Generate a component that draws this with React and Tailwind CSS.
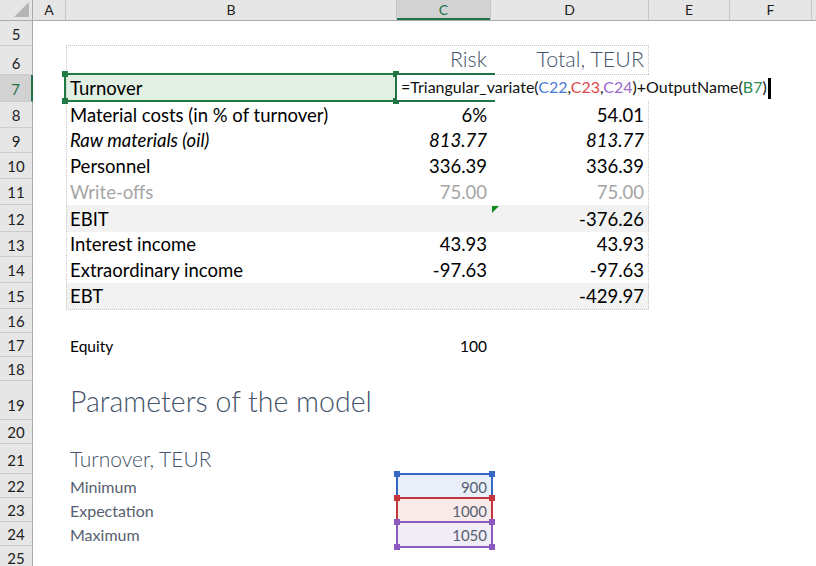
import React from 'react';

const FONT = "font-['Lato','Carlito',sans-serif]";

const COLS = [
  { key: 'A', w: 'w-[33px]' },
  { key: 'B', w: 'w-[331px]' },
  { key: 'C', w: 'w-[94px]', active: true },
  { key: 'D', w: 'w-[158px]' },
  { key: 'E', w: 'w-[81px]' },
  { key: 'F', w: 'w-[82px]' },
];

const BODY = 'text-[18.5px] text-black pb-[4px]';
const PARAM = 'text-[16px] text-[#56606f] pb-[3px]';
const PARAM_NUM = 'text-[15px] text-[#56606f] pb-[3px]';

// every row of the sheet, top to bottom
const ROWS = [
  { n: 5, h: 'h-[25px]' },
  { n: 6, h: 'h-[29px]', hdr: 'pt-[6px]', c: 'Risk', d: 'Total, TEUR', text: 'text-[21.5px] font-light text-[#44546a] pb-[5px]' },
  { n: 7, h: 'h-[27px]', b: 'Turnover', active: true, bBg: 'bg-[#e2f0e4]', text: 'text-[18.5px] text-black pb-[5px]' },
  { n: 8, h: 'h-[26px]', b: 'Material costs (in % of turnover)', c: '6%', d: '54.01', text: BODY },
  { n: 9, h: 'h-[25px]', b: 'Raw materials (oil)', c: '813.77', d: '813.77', text: `${BODY} italic` },
  { n: 10, h: 'h-[26px]', b: 'Personnel', c: '336.39', d: '336.39', text: BODY },
  { n: 11, h: 'h-[26px]', b: 'Write-offs', c: '75.00', d: '75.00', text: 'text-[18.5px] text-[#a5a5a5] pb-[4px]' },
  { n: 12, h: 'h-[27px]', b: 'EBIT', d: '-376.26', shade: 'bg-[#f2f2f2]', text: BODY },
  { n: 13, h: 'h-[25px]', b: 'Interest income', c: '43.93', d: '43.93', text: BODY },
  { n: 14, h: 'h-[26px]', b: 'Extraordinary income', c: '-97.63', d: '-97.63', text: BODY },
  { n: 15, h: 'h-[26px]', b: 'EBT', d: '-429.97', shade: 'bg-[#f2f2f2]', text: BODY },
  { n: 16, h: 'h-[24px]' },
  { n: 17, h: 'h-[24px]', b: 'Equity', c: '100', text: 'text-[15.5px] text-black pb-[3px]' },
  { n: 18, h: 'h-[24px]' },
  { n: 19, h: 'h-[39px]', hdr: 'pt-[11px]', b: 'Parameters of the model', text: 'text-[28.5px] font-light text-[#44546a] pb-[5px]' },
  { n: 20, h: 'h-[24px]' },
  { n: 21, h: 'h-[30px]', hdr: 'pt-[3px]', b: 'Turnover, TEUR', text: 'text-[21px] font-light text-[#44546a] pb-[5px]' },
  { n: 22, h: 'h-[24px]', b: 'Minimum', c: '900', text: PARAM, cText: PARAM_NUM, cBg: 'bg-[#e9eff9]' },
  { n: 23, h: 'h-[24px]', b: 'Expectation', c: '1000', text: PARAM, cText: PARAM_NUM, cBg: 'bg-[#f9eaea]' },
  { n: 24, h: 'h-[24px]', b: 'Maximum', c: '1050', text: PARAM, cText: PARAM_NUM, cBg: 'bg-[#f0edf7]' },
  { n: 25, h: 'h-[24px]' },
];

function ColumnHeader() {
  return (
    <div className="flex h-[21px] border-b border-[#ababab] bg-[#e6e6e6] text-[14px] text-[#222]">
      <div className="w-[33px] flex-shrink-0 border-r border-[#ababab] flex items-start justify-end pt-[2px] pr-[3px]">
        <svg width="15" height="15" viewBox="0 0 15 15">
          <polygon points="15,0 15,15 0,15" fill="#b5b5b5" />
        </svg>
      </div>
      {COLS.map(col => (
        <div
          key={col.key}
          className={`${col.w} flex-shrink-0 border-r border-[#c6c6c6] flex items-center justify-center leading-none ${col.active ? 'bg-[#d2d2d2] text-[#217346] shadow-[inset_0_-2px_0_#217346]' : ''}`}
        >
          {col.key}
        </div>
      ))}
      <div className="flex-1" />
    </div>
  );
}

function Row({ row }) {
  const shade = row.shade || '';
  return (
    <div className={`flex ${row.h}`}>
      <div
        className={`w-[33px] flex-shrink-0 flex items-center justify-center text-[15px] leading-none border-b border-[#cbcbcb] ${row.hdr || 'pt-[2px]'} ${row.active ? 'bg-[#d2d2d2] text-[#217346] border-r-2 border-r-[#217346]' : 'bg-[#e6e6e6] text-[#222] border-r border-r-[#ababab]'}`}
      >
        {row.n}
      </div>
      <div className="w-[33px] flex-shrink-0" />
      <div className={`w-[331px] flex-shrink-0 flex items-end pl-[4px] leading-none whitespace-nowrap ${shade} ${row.bBg || ''} ${row.text || ''}`}>
        {row.b}
      </div>
      <div className={`w-[94px] flex-shrink-0 flex items-end justify-end pr-[4px] leading-none whitespace-nowrap ${shade} ${row.cBg || ''} ${row.cText || row.text || ''}`}>
        {row.c}
      </div>
      <div className={`w-[158px] flex-shrink-0 flex items-end justify-end pr-[5px] leading-none whitespace-nowrap ${shade} ${row.text || ''}`}>
        {row.d}
      </div>
      <div className="flex-1" />
    </div>
  );
}

// coloured outline Excel draws round a range that a formula refers to
function RefBox({ pos, border, handle }) {
  return (
    <div className={`absolute pointer-events-none ${pos}`}>
      <div className={`absolute inset-0 border-2 ${border}`} />
      <div className={`absolute -left-[2px] -top-[2px] w-[6px] h-[6px] ${handle}`} />
      <div className={`absolute -right-[2px] -top-[2px] w-[6px] h-[6px] ${handle}`} />
      <div className={`absolute -left-[2px] -bottom-[2px] w-[6px] h-[6px] ${handle}`} />
      <div className={`absolute -right-[2px] -bottom-[2px] w-[6px] h-[6px] ${handle}`} />
    </div>
  );
}

export default function App() {
  return (
    <div className={`relative w-[816px] h-[566px] overflow-hidden bg-white ${FONT}`}>
      <ColumnHeader />
      {ROWS.map(row => <Row key={row.n} row={row} />)}

      {/* dotted table outline */}
      <div className="absolute left-[66px] top-[45px] w-[583px] h-[265px] border border-dotted border-[#c4c4c4] pointer-events-none" />
      <div className="absolute left-[397px] top-[74px] w-[252px] border-t border-dotted border-[#c4c4c4]" />

      <RefBox pos="left-[64px] top-[73px] w-[333px] h-[29px]" border="border-[#1f7a43]" handle="bg-[#1f7a43]" />

      {/* C7 in edit mode, formula spills over D7 */}
      <div className="absolute left-[395px] top-[73px] w-[100px] h-[29px] border-2 border-r-0 border-[#217346]" />
      <div className="absolute left-[394px] top-[72px] w-[5px] h-[5px] bg-[#217346]" />
      <div className="absolute left-[394px] top-[98px] w-[5px] h-[5px] bg-[#217346]" />
      <div className="absolute left-[397px] top-[75px] w-[384px] h-[25px] bg-white flex items-end pb-[1px] pl-[4px] text-[16px] leading-none text-[#111] whitespace-nowrap">
        <span className="pb-[4px]">
          =Triangular_variate(<span className="text-[#4a7bd6]">C22</span>,<span className="text-[#df4a4c]">C23</span>,<span className="text-[#9a69cc]">C24</span>)+OutputName(<span className="text-[#2e8a50]">B7</span>)
        </span>
        <span className="inline-block w-[3px] h-[21px] bg-black ml-[1px]" />
      </div>

      {/* comment marker on D12 */}
      <svg className="absolute left-[492px] top-[206px]" width="7" height="7" viewBox="0 0 7 7">
        <polygon points="0,0 7,0 0,7" fill="#0f8a16" />
      </svg>

      <RefBox pos="left-[396px] top-[473px] w-[97px] h-[26px]" border="border-[#3568c4]" handle="bg-[#3568c4]" />
      <RefBox pos="left-[396px] top-[497px] w-[97px] h-[26px]" border="border-[#c4343c]" handle="bg-[#c4343c]" />
      <RefBox pos="left-[396px] top-[521px] w-[97px] h-[27px]" border="border-[#8b5ac0]" handle="bg-[#8b5ac0]" />
    </div>
  );
}
